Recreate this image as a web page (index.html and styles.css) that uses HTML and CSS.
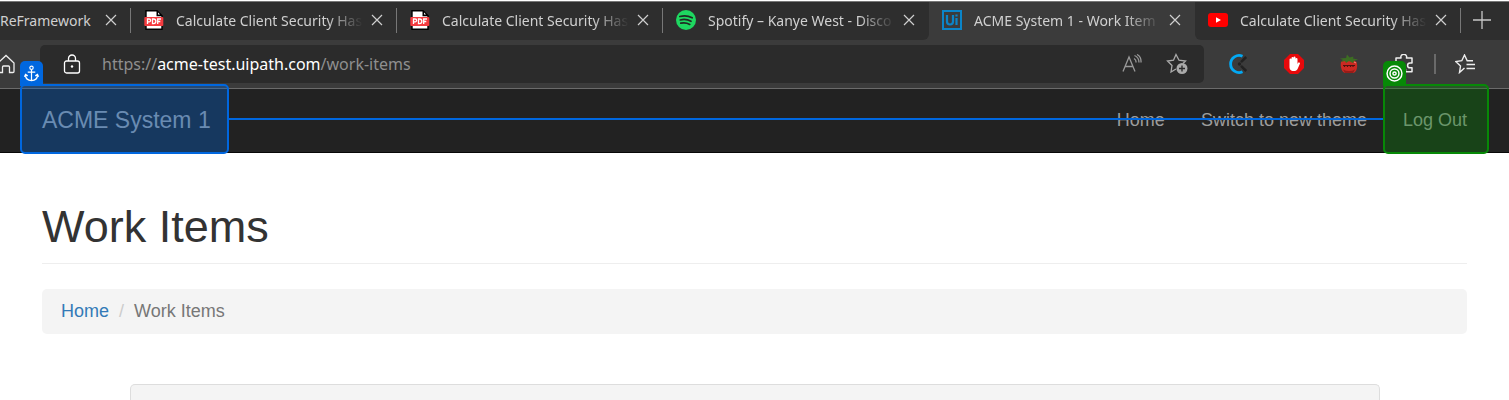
FILE: index.html
```html
<!DOCTYPE html>
<html lang="en">
<head>
<meta charset="utf-8">
<title>ACME System 1 - Work Items</title>
<link rel="stylesheet" href="styles.css">
</head>
<body>
<svg class="defs" aria-hidden="true">
  <symbol id="close" viewBox="0 0 12 12"><path d="M1 1l10 10M11 1L1 11" fill="none" stroke="#cfcfcf" stroke-width="1.2"/></symbol>
  <symbol id="pdf" viewBox="0 0 20 20">
    <path d="M2 .7h11l5 5v13.600H2z" fill="#fff" stroke="#000" stroke-width="1.4"/>
    <path d="M12.500 0L18.700 6.200h-6.200z" fill="#000"/><path d="M14 2.600L16 4.600h-2z" fill="#fff"/>
    <rect x=".3" y="7" width="19" height="9" rx="1" fill="#f43b3f"/>
    <path d="M3.500 14V9h1.700a1.300 1.300 0 0 1 0 2.800H3.500M8.500 9v4.700h1a2.200 2.200 0 0 0 0-4.700zM13.700 14V9H17M13.700 11.500h2.600" fill="none" stroke="#fff" stroke-width="1.300"/>
  </symbol>
</svg>

<header class="browser">
  <nav class="tabs" aria-label="Browser tabs">
    <div class="tab tab-first"><span class="tab-title">ReFramework</span><button class="tab-close" aria-label="Close tab"><svg><use href="#close"/></svg></button></div>
    <div class="tab"><svg class="favicon"><use href="#pdf"/></svg><span class="tab-title">Calculate Client Security Has</span><button class="tab-close" aria-label="Close tab"><svg><use href="#close"/></svg></button></div>
    <div class="tab"><svg class="favicon"><use href="#pdf"/></svg><span class="tab-title">Calculate Client Security Has</span><button class="tab-close" aria-label="Close tab"><svg><use href="#close"/></svg></button></div>
    <div class="tab tab-before">
      <svg class="favicon" viewBox="0 0 20 20"><circle cx="10" cy="10" r="10" fill="#1ed760"/><path d="M3.800 6.500c4.200-1.200 8.500-.8 12.400 1.300M4.300 10c3.700-1 7.300-.6 10.700 1.300M4.800 13.200c3.100-.7 6.100-.4 9 1.200" fill="none" stroke="#202a23" stroke-width="1.700" stroke-linecap="round"/></svg>
      <span class="tab-title">Spotify – Kanye West - Disco</span><button class="tab-close" aria-label="Close tab"><svg><use href="#close"/></svg></button></div>
    <div class="tab tab-active">
      <svg class="favicon" viewBox="0 0 20 20"><path d="M1 1h18v18H1z" fill="none" stroke="#0b85c9" stroke-width="2"/><path d="M5 5v6.500a3 3 0 0 0 6 0V5M14.500 8v7M14.500 4.500v2" fill="none" stroke="#0b85c9" stroke-width="2.200"/></svg>
      <span class="tab-title">ACME System 1 - Work Item</span><button class="tab-close" aria-label="Close tab"><svg><use href="#close"/></svg></button></div>
    <div class="tab tab-after">
      <svg class="favicon" viewBox="0 0 20 20"><rect y="3" width="20" height="14" rx="3" fill="#f00"/><path d="M8 7.200l5 2.800-5 2.800z" fill="#fff"/></svg>
      <span class="tab-title">Calculate Client Security Has</span><button class="tab-close" aria-label="Close tab"><svg><use href="#close"/></svg></button></div>
    <button class="new-tab" aria-label="New tab"><svg viewBox="0 0 18 18"><path d="M9 0v18M0 9h18" stroke="#c8c8c8" stroke-width="1.300"/></svg></button>
  </nav>

  <div class="toolbar">
    <button class="tool home" aria-label="Home page"><svg viewBox="0 0 20 20"><path d="M2 9l8-7.500L18 9v8.500a1 1 0 0 1-1 1h-3.500V13a1 1 0 0 0-1-1h-5a1 1 0 0 0-1 1v5.500H3a1 1 0 0 1-1-1z" fill="none" stroke="#eee" stroke-width="1.300"/></svg></button>
    <div class="address">
      <button class="tool" aria-label="Site information"><svg viewBox="0 0 20 20"><path d="M4.500 7h11a2 2 0 0 1 2 2v8a2 2 0 0 1-2 2h-11a2 2 0 0 1-2-2V9a2 2 0 0 1 2-2zM6.500 7V4.500a3.500 3.500 0 0 1 7 0V7" fill="none" stroke="#fff" stroke-width="1.300"/><circle cx="10" cy="12.500" r="1.200" fill="#fff"/></svg></button>
      <div class="url" role="textbox" tabindex="0" aria-label="Address">https://<b>acme-test.uipath.com</b>/work-items</div>
      <button class="tool" aria-label="Read aloud"><svg viewBox="0 0 20 20"><path d="M1 17.500L7 3l6 14.500M3 12.500h8M12 4.500a4 4 0 0 1 2 4M12.500 1.500c3 1.200 4.500 3.500 4.500 7M15 .5c3 1.500 4.300 4 4 8" fill="none" stroke="#999" stroke-width="1.300"/></svg></button>
      <button class="tool favorite" aria-label="Add to favorites"><svg viewBox="0 0 22 22"><path d="M10 16l-5 3 1-6.500-4.500-4.500 6-.8L10 1.500l3 5.700 6.500.8-2.500 2.500" fill="none" stroke="#aaa" stroke-width="1.300"/><circle cx="16" cy="15.500" r="5.500" fill="#aaa"/><path d="M16 12.500v6M13 15.500h6" stroke="#2b2b2b" stroke-width="1.400"/></svg></button>
    </div>
    <div class="extensions">
      <button class="tool" aria-label="Clockify"><svg viewBox="0 0 20 20"><path d="M13.500 2.200A8.500 8.500 0 1 0 13.500 17.800" fill="none" stroke="#03a9f4" stroke-width="2.800"/><path d="M12 8.200L17.200 3M12 11.800l5.200 5.200" stroke="#222" stroke-width="2.500"/><circle cx="10.500" cy="10" r="1.700" fill="#222"/></svg></button>
      <button class="tool" aria-label="Ad blocker"><svg viewBox="0 0 20 20"><path d="M6 0h8l6 6v8l-6 6H6l-6-6V6z" fill="#e7090b"/><path d="M5.500 10V5.500a1 1 0 0 1 2 0V4a1 1 0 0 1 2 0v-.5a1 1 0 0 1 2 0V5a1 1 0 0 1 2 0v5l.7-1.200a1 1 0 0 1 1.800.7l-2.300 5.200c-.7 1.700-2 2.300-4 2.300C6.500 17 5.500 15 5.500 13z" fill="#fff"/></svg></button>
      <button class="tool" aria-label="Pomodoro"><svg viewBox="0 0 20 20"><path d="M2 8c-1 5 1 10.500 4 11h8c4-.8 5-7 3.500-11L13 5H6z" fill="#cc2922"/><path d="M4 15.500q6 3 12 0l-2 3.500H6z" fill="#961c18"/><path d="M4 11.500h12M5.500 11v2M8.500 11v2M11.500 11v2M14 11v2" stroke="#501210" stroke-width="1.200"/><path d="M1 4.500l6-.5 1-3.500 2.500 3 4-1-.5 2 5 1-4 1.500-1 2-4-2-3 2-1-2-4 1 2-2z" fill="#3d6d23"/><path d="M15 8l2 1" stroke="#f2917d"/></svg></button>
      <button class="tool" aria-label="Extensions"><svg viewBox="0 0 20 20"><path d="M2 4h5a2.900 2.900 0 1 1 5.500 0H18v5h-2a2.400 2.400 0 1 0 0 4.800h2v4H11a3 3 0 1 0-5 0H2z" fill="none" stroke="#eee" stroke-width="1.500" stroke-linejoin="round"/></svg></button>
    </div>
    <span class="divider"></span>
    <button class="tool collections" aria-label="Favorites"><svg viewBox="0 0 20 20"><path d="M9.500 14l-5 4.500L5.500 12 .8 7.500l6-.8L9.500 1l2.700 5.700H18M11.500 10.500H20M11.500 14.500H20" fill="none" stroke="#eee" stroke-width="1.400"/></svg></button>
  </div>
</header>

<nav class="navbar" aria-label="Main">
  <a class="brand" href="#">ACME System 1
    <span class="target target-anchor"><span class="badge"><svg viewBox="0 0 16 18"><path d="M8 5v11.500M4 7.500h8M1.500 10.500c.3 4 3.200 6 6.500 6s6.200-2 6.500-6M.5 12.500l1.200-2.500 2.300 1.500M15.500 12.500l-1.200-2.500L12 11.500" fill="none" stroke="#fff" stroke-width="1.300"/><circle cx="8" cy="3" r="1.800" fill="none" stroke="#fff" stroke-width="1.200"/></svg></span></span>
  </a>
  <div class="links">
    <a href="#">Home</a>
    <a href="#">Switch to new theme</a>
    <a class="logout" href="#">Log Out
      <span class="target target-element"><span class="badge"><svg viewBox="0 0 16 16"><g fill="none" stroke="#fff" stroke-width="1.400"><circle cx="8" cy="8" r="7"/><circle cx="8" cy="8" r="4.200"/><circle cx="8" cy="8" r="1.500"/></g></svg></span></span>
    </a>
  </div>
  <span class="connector"></span>
</nav>

<main class="page">
  <h1>Work Items</h1>
  <ol class="breadcrumb"><li><a href="#">Home</a></li><li>Work Items</li></ol>
  <section class="panel"></section>
</main>
</body>
</html>
```
FILE: styles.css
```css
* { box-sizing: border-box; }
html { background: #fff; }
body { margin: 0; font-family: "Liberation Sans", Arial, sans-serif; font-size: 18px; color: #333; }
button { padding: 0; border: 0; background: none; display: flex; align-items: center; justify-content: center; flex: none; }
a { color: #337ab7; text-decoration: none; }
.defs { position: absolute; width: 0; height: 0; }

.browser { font-family: "Noto Sans", sans-serif; background: #3b3b3b; border-top: 1px solid #fff; border-bottom: 1px solid #6b6b6b; }
.tabs { display: flex; height: 39px; background: #3b3b3b; border-top: 1px solid #777; overflow: hidden; }
.tab { position: relative; display: flex; align-items: center; flex: 0 1 266px; min-width: 0; padding: 0 6px 2px 13px; background: #2e2e2e; color: #d0d0d0; font-size: 14px; }
.tab::after { content: ""; position: absolute; right: 0; top: 6px; width: 1px; height: 25px; background: #777; }
.tab-first { flex-basis: 131px; padding-left: 0; }
.tab-before { border-radius: 0 0 6px 0; }
.tab-after { border-radius: 0 0 0 6px; }
.tab-active { background: #3b3b3b; }
.tab-before::after, .tab-active::after { display: none; }
.favicon { width: 20px; height: 20px; flex: none; margin-right: 12px; }
.tab-title { flex: 1; min-width: 0; overflow: hidden; white-space: nowrap; mask-image: linear-gradient(to right, #000 calc(100% - 36px), transparent); }
.tab-first .tab-title { mask-image: none; }
.tab-close { width: 28px; height: 28px; }
.tab-close svg { width: 12px; height: 12px; }
.new-tab { padding: 0 6px 2px 0; background: #2e2e2e; flex: 1; }
.new-tab svg { width: 18px; height: 18px; }

.toolbar { display: flex; align-items: center; height: 48px; padding-right: 34px; }
.tool { width: 20px; height: 20px; }
.tool svg { width: 20px; height: 20px; }
.home { width: 40px; justify-content: flex-start; }
.home svg { margin-left: -4px; }
.address { display: flex; align-items: center; flex: 1; height: 38px; padding: 0 16px 0 22px; background: #2b2b2b; border-radius: 5px; }
.url { flex: 1; margin-left: 20px; font-size: 16px; color: #8f8f8f; white-space: nowrap; }
.url b { font-weight: 400; color: #fff; }
.favorite { margin-left: 24px; width: 22px; }
.favorite svg { width: 22px; height: 22px; }
.extensions { display: flex; gap: 35px; margin-left: 25px; }
.divider { width: 2px; height: 20px; margin: 0 19px 0 20px; background: #6a6a6a; }

.navbar { position: relative; display: flex; align-items: stretch; justify-content: space-between; height: 64px; padding: 0 20px; background: #222; border-bottom: 1px solid #080808; }
.navbar a { position: relative; display: flex; align-items: center; color: #9d9d9d; }
.brand { padding: 0 18px 0 22px; font-size: 23px; }
.links { display: flex; gap: 36px; }
.links .logout { padding: 0 22px 0 20px; margin-left: -20px; }
.target { position: absolute; inset: -5px 0 -2px; border: 2px solid; border-radius: 5px; }
.target-anchor { border-color: #0067df; background: rgba(0, 103, 223, 0.33); }
.target-element { border-color: #078907; background: rgba(7, 137, 7, 0.33); }
.badge { position: absolute; left: -2px; top: -25px; width: 23px; height: 25px; display: flex; align-items: center; justify-content: center; border-radius: 5px 5px 0 0; }
.badge svg { width: 17px; height: 17px; }
.target-anchor .badge { background: #0067df; }
.target-element .badge { background: #078907; }
.connector { position: absolute; left: 228px; right: 126px; top: 29px; height: 2px; background: #0067df; }

.page { padding: 49px 42px 0; }
h1 { margin: 0; padding-bottom: 11px; border-bottom: 1px solid #eee; font-size: 45px; line-height: 50px; font-weight: 400; }
.breadcrumb { display: flex; margin: 25px 0 50px; padding: 9px 19px; line-height: 27px; list-style: none; background: #f4f4f4; border-radius: 5px; color: #777; }
.breadcrumb li + li::before { content: "/"; padding: 0 10px; color: #ccc; }
.panel { padding-top: 15px; margin: 0 87px 0 88px; background: #f4f4f4; border: 1px solid #ddd; border-bottom: 0; border-radius: 5px 5px 0 0; }
```
